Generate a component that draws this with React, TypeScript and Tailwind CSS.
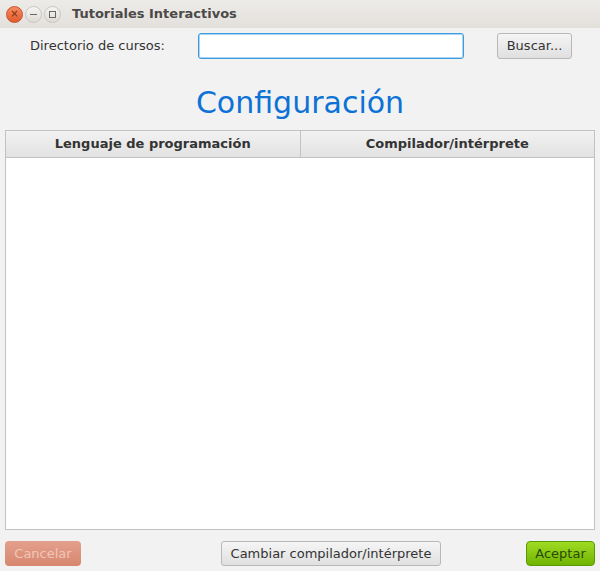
export default function App() {
  const font = { fontFamily: '"DejaVu Sans", "Open Sans", sans-serif' };
  return (
    <div className="flex h-[571px] w-[600px] flex-col bg-[#f2f2f2] text-[#333]" style={font}>
      {/* title bar */}
      <div className="flex h-[28px] shrink-0 items-center bg-gradient-to-b from-[#edebe8] to-[#e3e0dc]">
        <div className="ml-[6px] flex items-center gap-[2px]">
          <div className="flex h-[17px] w-[17px] items-center justify-center rounded-full border border-[#c9532e] bg-gradient-to-b from-[#f58a5f] to-[#e25a2c] text-[10px] leading-none text-[#7a2a10]">
            ×
          </div>
          <div className="flex h-[17px] w-[17px] items-center justify-center rounded-full border border-[#c8c5c0] bg-gradient-to-b from-[#f6f5f3] to-[#dedbd6]">
            <div className="h-px w-[7px] bg-[#6b6864]" />
          </div>
          <div className="flex h-[17px] w-[17px] items-center justify-center rounded-full border border-[#c8c5c0] bg-gradient-to-b from-[#f6f5f3] to-[#dedbd6]">
            <div className="h-[7px] w-[7px] border border-[#6b6864]" />
          </div>
        </div>
        <span className="ml-[11px] text-[13px] font-bold text-[#4c4a48]">Tutoriales Interactivos</span>
      </div>

      {/* directory row */}
      <div className="mt-[5px] flex h-[26px] items-center text-[13px]">
        <span className="ml-[30px] w-[168px]">Directorio de cursos:</span>
        <div className="h-[26px] w-[266px] rounded-[3px] border border-[#3d9be0] bg-white shadow-[inset_0_0_0_1px_#a9d4f3]" />
        <button className="ml-[33px] h-[26px] w-[75px] rounded-[3px] border border-[#b8b8b8] bg-gradient-to-b from-[#f5f5f5] to-[#e0e0e0] text-[13px] text-[#333]">
          Buscar...
        </button>
      </div>

      <h1 className="mt-[26px] text-center text-[30px] leading-[36px] text-[#0d72d6]">Configuración</h1>

      {/* table */}
      <div className="mx-[5px] mt-[9px] flex flex-1 flex-col border border-[#c2c2c2] bg-white">
        <div className="flex h-[27px] border-b border-[#c2c2c2] bg-gradient-to-b from-[#f2f2f2] to-[#e2e2e2] text-[13px] font-bold text-[#333]">
          <div className="flex flex-1 items-center justify-center border-r border-[#c2c2c2]">Lenguaje de programación</div>
          <div className="flex flex-1 items-center justify-center">Compilador/intérprete</div>
        </div>
      </div>

      {/* bottom buttons */}
      <div className="mb-[5px] mt-[11px] flex h-[25px] items-center px-[5px] text-[13px]">
        <button className="h-[25px] w-[76px] rounded-[4px] bg-gradient-to-b from-[#e4a08d] to-[#d6876f] text-[#f1c6b8]">
          Cancelar
        </button>
        <button className="ml-[140px] h-[25px] w-[220px] rounded-[3px] border border-[#b8b8b8] bg-gradient-to-b from-[#f5f5f5] to-[#e0e0e0] text-[#333]">
          Cambiar compilador/intérprete
        </button>
        <button className="ml-auto h-[25px] w-[69px] rounded-[4px] border border-[#5a9a00] bg-gradient-to-b from-[#9fdb22] to-[#6fb400] text-[#2a4a00]">
          Aceptar
        </button>
      </div>
    </div>
  );
}
